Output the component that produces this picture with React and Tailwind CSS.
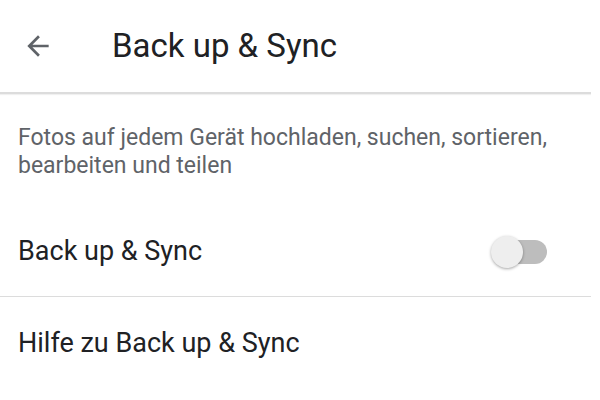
export default function App() {
  return (
    <div className="w-[591px] h-[400px] bg-white font-['Roboto',sans-serif] overflow-hidden">
      <div className="h-[94px] flex items-center border-b-2 border-[#dcdcdc] shadow-[0_1px_1px_rgba(0,0,0,0.06)]">
        <div className="w-[112px] pl-[22px] flex items-center">
          <svg width="32" height="32" viewBox="0 0 24 24" fill="#5f6368">
            <path d="M20 11H7.83l5.59-5.59L12 4l-8 8 8 8 1.41-1.41L7.83 13H20v-2z" />
          </svg>
        </div>
        <h1 className="text-[33px] text-[#202124] leading-none pb-[2px]">Back up &amp; Sync</h1>
      </div>

      <p className="px-[18px] pt-[30px] text-[23px] leading-[28px] text-[#5f6368]">
        Fotos auf jedem Gerät hochladen, suchen, sortieren, bearbeiten und teilen
      </p>

      <div className="h-[90px] flex items-center justify-between pl-[18px] pr-[44px] border-b border-[#dcdcdc] mt-[27px]">
        <span className="text-[27px] text-[#202124]">Back up &amp; Sync</span>
        <div className="relative w-[56px] h-[32px] flex items-center">
          <div className="ml-[10px] w-[46px] h-[24px] rounded-full bg-[#bdbdbd]" />
          <div className="absolute left-0 top-0 w-[32px] h-[32px] rounded-full bg-[#eeeeee] shadow-[0_1px_3px_rgba(0,0,0,0.35)]" />
        </div>
      </div>

      <div className="h-[92px] flex items-center pl-[18px]">
        <span className="text-[27px] text-[#202124]">Hilfe zu Back up &amp; Sync</span>
      </div>
    </div>
  );
}
